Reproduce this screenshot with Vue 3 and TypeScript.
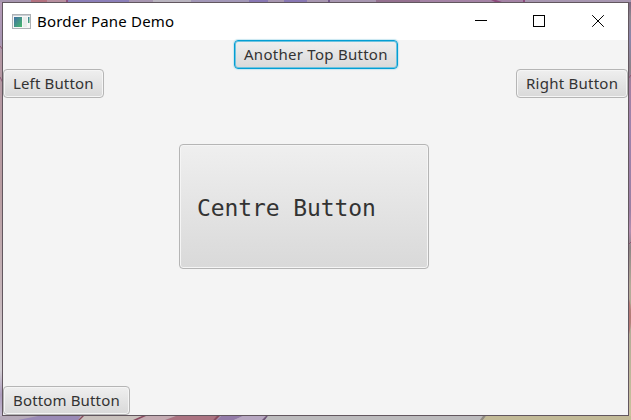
<script setup lang="ts">
import { ref } from 'vue'

const title = ref('Border Pane Demo')
</script>

<template>
  <main class="desktop">
    <svg class="wallpaper" viewBox="0 0 631 420" aria-hidden="true">
      <defs>
        <linearGradient id="left-edge" x1="0" y1="0" x2="0" y2="1">
          <stop offset="0" stop-color="#b59ab7" />
          <stop offset=".1" stop-color="#a796b3" />
          <stop offset=".13" stop-color="#b397a3" />
          <stop offset=".45" stop-color="#b99da2" />
          <stop offset=".7" stop-color="#c6b5ba" />
          <stop offset=".88" stop-color="#d4d0d5" />
          <stop offset=".94" stop-color="#ad9cbd" />
          <stop offset="1" stop-color="#c8bfd3" />
        </linearGradient>
        <linearGradient id="right-edge" x1="0" y1="0" x2="0" y2="1">
          <stop offset="0" stop-color="#79617f" />
          <stop offset=".04" stop-color="#8f8790" />
          <stop offset=".09" stop-color="#8c85ac" />
          <stop offset=".16" stop-color="#8c838a" />
          <stop offset=".2" stop-color="#a380a1" />
          <stop offset=".3" stop-color="#9e83ad" />
          <stop offset=".5" stop-color="#9b7fa3" />
          <stop offset=".55" stop-color="#b48fb1" />
          <stop offset=".59" stop-color="#8f8586" />
          <stop offset=".68" stop-color="#b5aa99" />
          <stop offset=".8" stop-color="#b5ad98" />
          <stop offset="1" stop-color="#cbc29e" />
        </linearGradient>
      </defs>
      <rect width="3" height="420" fill="url(#left-edge)" />
      <rect x="628" width="3" height="420" fill="url(#right-edge)" />
      <path d="M0 0H631V2H0Z" fill="#a796b0" />
      <path d="M31 0H47V2H31Z" fill="#b3717f" />
      <path d="M47 0H66V2H47Z" fill="#b78f9f" />
      <path d="M66 0H68V2H66Z" fill="#8d4f7c" />
      <path d="M68 0H129V2H68Z" fill="#8b7fb9" />
      <path d="M153 0H191V2H153Z" fill="#b9b4bf" />
      <path d="M191 0H249V2H191Z" fill="#a297b7" />
      <path d="M249 0H268V2H249ZM284 0H307V2H284Z" fill="#8877b3" />
      <path d="M328 0H330V2H328Z" fill="#74578f" />
      <path d="M376 0H420V2H376Z" fill="#94708f" />
      <path d="M420 0H523V2H420Z" fill="#a483a5" />
      <path d="M491 0H496L502 2H495ZM523 0H525V2H523Z" fill="#8d4b7d" />
      <path d="M0 416H631V420H0Z" fill="#b6aab9" />
      <path d="M18 420L38 416H81L78 420Z" fill="#9a8ab6" />
      <path d="M81 416H144L134 420H78Z" fill="#c9c1bd" />
      <path d="M144 416H176L165 420H138Z" fill="#c4abb2" />
      <path d="M176 416H218L213 420H165Z" fill="#ab7381" />
      <path d="M82 416H84L80 420H78ZM142 416H146L137 420H133ZM217 416H220L216 420H213Z" fill="#8a4c60" />
      <path d="M221 416H243L234 420H217Z" fill="#937ba8" />
      <path d="M243 416H265L262 420H234Z" fill="#b7a7c1" />
      <path d="M266 416H268L265 420H262Z" fill="#6f5779" />
      <path d="M268 416H483L480 420H265Z" fill="#bcbbbd" />
      <path d="M483 416H486L483 420H480Z" fill="#8f8b80" />
      <path d="M486 416H631V420H483Z" fill="#c2ba97" />
      <path d="M0 46L3 50M0 77L3 83M628 79L631 75M628 245L631 242" fill="none" stroke="#8d5874" />
      <path d="M628 297Q631 302 631 316T628 337Z" fill="#b57a76" />
    </svg>

    <section class="window">
      <header class="titlebar">
        <svg class="app-icon" width="19" height="15" viewBox="0 0 19 15" aria-hidden="true">
          <defs>
            <linearGradient id="icon-fill" x1="0" y1="0" x2="1" y2="1">
              <stop offset="0" stop-color="#416ea5" />
              <stop offset="1" stop-color="#46b96b" />
            </linearGradient>
          </defs>
          <rect x=".5" y=".5" width="18" height="14" fill="#f7f7f7" stroke="#aeb2b6" />
          <path d="M1 1.5H18" stroke="#c9ced4" />
          <rect x="2" y="3" width="8" height="10" fill="url(#icon-fill)" />
          <path d="M11 3H15V13H11Z" fill="#e8edeb" />
          <path d="M16 3H17.5V9H16Z" fill="url(#icon-fill)" />
        </svg>
        <h1 class="title">{{ title }}</h1>
        <div class="controls">
          <button class="control" aria-label="Minimize">
            <svg width="12" height="12" shape-rendering="crispEdges"><path d="M0 5.5H12" /></svg>
          </button>
          <button class="control" aria-label="Maximize">
            <svg width="12" height="12" shape-rendering="crispEdges"><path d="M.5 .5H11.5V11.5H.5Z" /></svg>
          </button>
          <button class="control" aria-label="Close">
            <svg width="12" height="12"><path d="M.2 .2L11.8 11.8M11.8 .2L.2 11.8" /></svg>
          </button>
        </div>
      </header>

      <div class="pane">
        <div class="top"><button class="button focused"><span>Another Top Button</span></button></div>
        <div class="middle">
          <button class="button left"><span>Left Button</span></button>
          <button class="button centre"><span>Centre Button</span></button>
          <button class="button right"><span>Right Button</span></button>
        </div>
        <div class="bottom"><button class="button bottom-button"><span>Bottom Button</span></button></div>
      </div>
    </section>
  </main>
</template>

<style>
body {
  margin: 0;
  overflow: hidden;
}
</style>

<style scoped>
.desktop {
  display: grid;
  width: 631px;
  height: 420px;
  font-family: "Noto Sans", "Open Sans", sans-serif;
}

.wallpaper,
.window {
  grid-area: 1 / 1;
}

.wallpaper {
  width: 631px;
  height: 420px;
}

.window {
  z-index: 1;
  box-sizing: border-box;
  display: flex;
  flex-direction: column;
  width: 627px;
  height: 414px;
  margin: 2px;
  border: 1px solid #62575f;
  background: #f4f4f4;
}

.titlebar {
  display: flex;
  flex: 0 0 37px;
  align-items: center;
  background: #fff;
}

.app-icon {
  margin: 0 6px 1px 9px;
}

.title {
  flex: 1;
  margin: 0 0 2px;
  color: #000;
  font-size: 15px;
  font-weight: 400;
  line-height: 20px;
  letter-spacing: 0.2px;
  white-space: nowrap;
}

.controls {
  display: flex;
  margin-right: 1px;
}

.control {
  display: grid;
  place-items: center;
  box-sizing: border-box;
  width: 58.5px;
  height: 37px;
  padding: 0 0 1px;
  border: 0;
  background: none;
}

.control path {
  fill: none;
  stroke: #000;
}

.pane {
  display: flex;
  flex: 1;
  flex-direction: column;
}

.top {
  display: flex;
  justify-content: center;
}

.middle {
  display: flex;
  flex: 1;
  align-items: flex-start;
}

.bottom {
  display: flex;
}

.button {
  box-sizing: border-box;
  height: 29px;
  padding: 0 0 2px 9px;
  border: 1px solid #b5b5b5;
  border-radius: 4px;
  background: linear-gradient(#efefef, #d9d9d9);
  box-shadow: inset 0 0 0 1px #f5f5f5;
  color: #333;
  font-family: inherit;
  font-size: 15px;
  line-height: 20px;
  letter-spacing: 0.15px;
  text-align: left;
  white-space: nowrap;
}

.focused {
  width: 164px;
  margin-left: 1px;
  border-color: #039ed3;
  box-shadow: inset 0 0 0 1px #6fc3df, 0 0 1px 1px #c9e7f1;
  letter-spacing: 0.27px;
}

.left {
  width: 101px;
}

.centre {
  width: 250px;
  height: 125px;
  margin: 75px 87px 0 75px;
  padding: 2px 0 0 17px;
  font-family: "DejaVu Sans Mono", monospace;
  font-size: 23px;
  letter-spacing: -0.1px;
}

.right {
  width: 112px;
  letter-spacing: 0.25px;
}

.bottom-button {
  width: 127px;
}
</style>
